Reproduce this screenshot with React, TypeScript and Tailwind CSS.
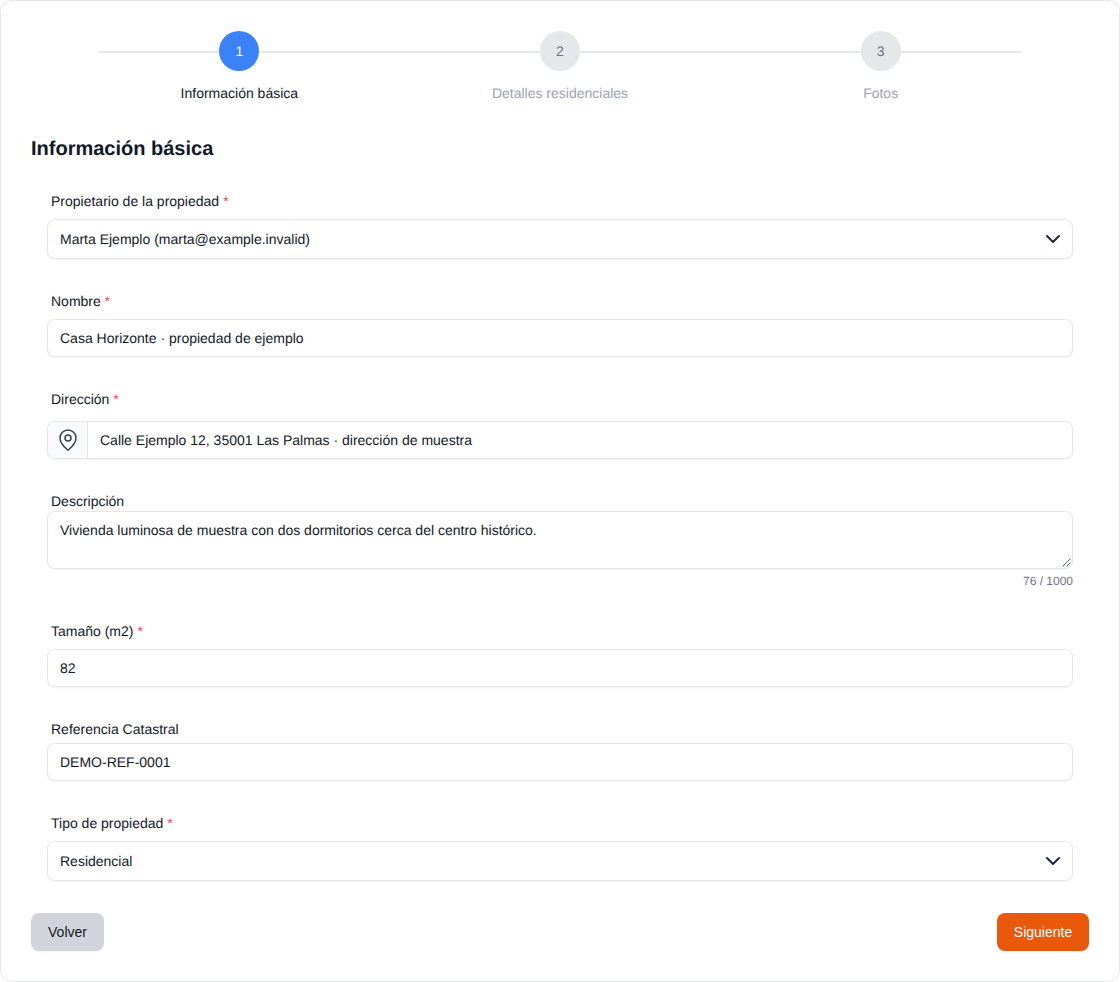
import { ChevronDown, MapPin } from "lucide-react";

const steps = [
  { n: 1, label: "Información básica", active: true },
  { n: 2, label: "Detalles residenciales", active: false },
  { n: 3, label: "Fotos", active: false },
];

function Label({ text, required, className }: { text: string; required?: boolean; className: string }) {
  return (
    <div className={`pl-1 text-sm leading-5 text-[#111827] ${className}`}>
      {text}
      {required && <span className="ml-1 text-[#ef4444]">*</span>}
    </div>
  );
}

function SelectBox({ value }: { value: string }) {
  return (
    <div className="h-10 flex items-center justify-between rounded-lg border border-[#e5e7eb] bg-white pl-3 pr-[7px] shadow-xs text-sm text-[#111827]">
      <span>{value}</span>
      <ChevronDown className="h-6 w-6 text-[#1f2937]" strokeWidth={2} />
    </div>
  );
}

function TextBox({ value }: { value: string }) {
  return (
    <div className="h-[38px] flex items-center rounded-lg border border-[#e5e7eb] bg-white px-3 shadow-xs text-sm text-[#111827]">
      {value}
    </div>
  );
}

export default function App() {
  return (
    <div className="h-[982px] w-[1120px] overflow-hidden rounded-xl border border-[#e5e7eb] bg-white px-[30px] font-['Liberation_Sans',Arial,sans-serif] [text-rendering:geometricPrecision]">
      <div className="relative mx-[48px] mt-[30px] grid grid-cols-3">
        <div className="absolute left-[20px] right-[20px] top-[20px] h-0.5 bg-[#e5e7eb]" />
        {steps.map((s) => (
          <div key={s.n} className="relative flex flex-col items-center">
            <div
              className={`h-10 w-10 rounded-full flex items-center justify-center text-sm ${
                s.active ? "bg-[#3b82f6] text-white" : "bg-[#e5e7eb] text-[#6b7280]"
              }`}
            >
              {s.n}
            </div>
            <div className={`mt-3 text-sm leading-5 ${s.active ? "text-[#111827]" : "text-[#9ca3af]"}`}>{s.label}</div>
          </div>
        ))}
      </div>

      <h2 className="mt-[32px] text-xl leading-7 font-bold text-[#111827]">Información básica</h2>

      <div className="px-4">
        <Label text="Propietario de la propiedad" required className="mt-[28px] mb-2" />
        <SelectBox value="Marta Ejemplo (marta@example.invalid)" />

        <Label text="Nombre" required className="mt-8 mb-2" />
        <TextBox value="Casa Horizonte · propiedad de ejemplo" />

        <Label text="Dirección" required className="mt-8 mb-3" />
        <div className="h-[38px] flex rounded-lg border border-[#e5e7eb] bg-white shadow-xs text-sm text-[#111827]">
          <div className="w-[40px] shrink-0 flex items-center justify-center rounded-l-lg border-r border-[#e5e7eb] bg-[#f9fafb]">
            <MapPin className="h-6 w-6 text-[#374151]" strokeWidth={1.5} />
          </div>
          <div className="flex items-center pl-3">Calle Ejemplo 12, 35001 Las Palmas · dirección de muestra</div>
        </div>

        <Label text="Descripción" className="mt-8" />
        <div className="relative h-[58px] rounded-lg border border-[#e5e7eb] bg-white px-3 py-2 shadow-xs text-sm leading-5 text-[#111827]">
          Vivienda luminosa de muestra con dos dormitorios cerca del centro histórico.
          <svg className="absolute bottom-px right-px h-2.5 w-2.5 text-[#374151]" viewBox="0 0 10 10" fill="none" stroke="currentColor" strokeWidth="0.8">
            <path d="M9.5 1.5 1.5 9.5M9.5 5.5 5.5 9.5" />
          </svg>
        </div>
        <div className="mt-1 text-right text-xs leading-4 text-[#6b7280]">76 / 1000</div>

        <Label text="Tamaño (m2)" required className="mt-[32px] mb-2" />
        <TextBox value="82" />

        <Label text="Referencia Catastral" className="mt-8" />
        <div className="mt-1">
          <TextBox value="DEMO-REF-0001" />
        </div>

        <Label text="Tipo de propiedad" required className="mt-8 mb-2" />
        <SelectBox value="Residencial" />
      </div>

      <div className="mt-8 flex items-center justify-between">
        <button className="h-[38px] w-[73px] rounded-lg bg-[#d1d5db] text-sm text-[#111827] shadow-xs">Volver</button>
        <button className="h-[38px] w-[92px] rounded-lg bg-[#ea580c] text-sm text-white shadow-xs">Siguiente</button>
      </div>
    </div>
  );
}
